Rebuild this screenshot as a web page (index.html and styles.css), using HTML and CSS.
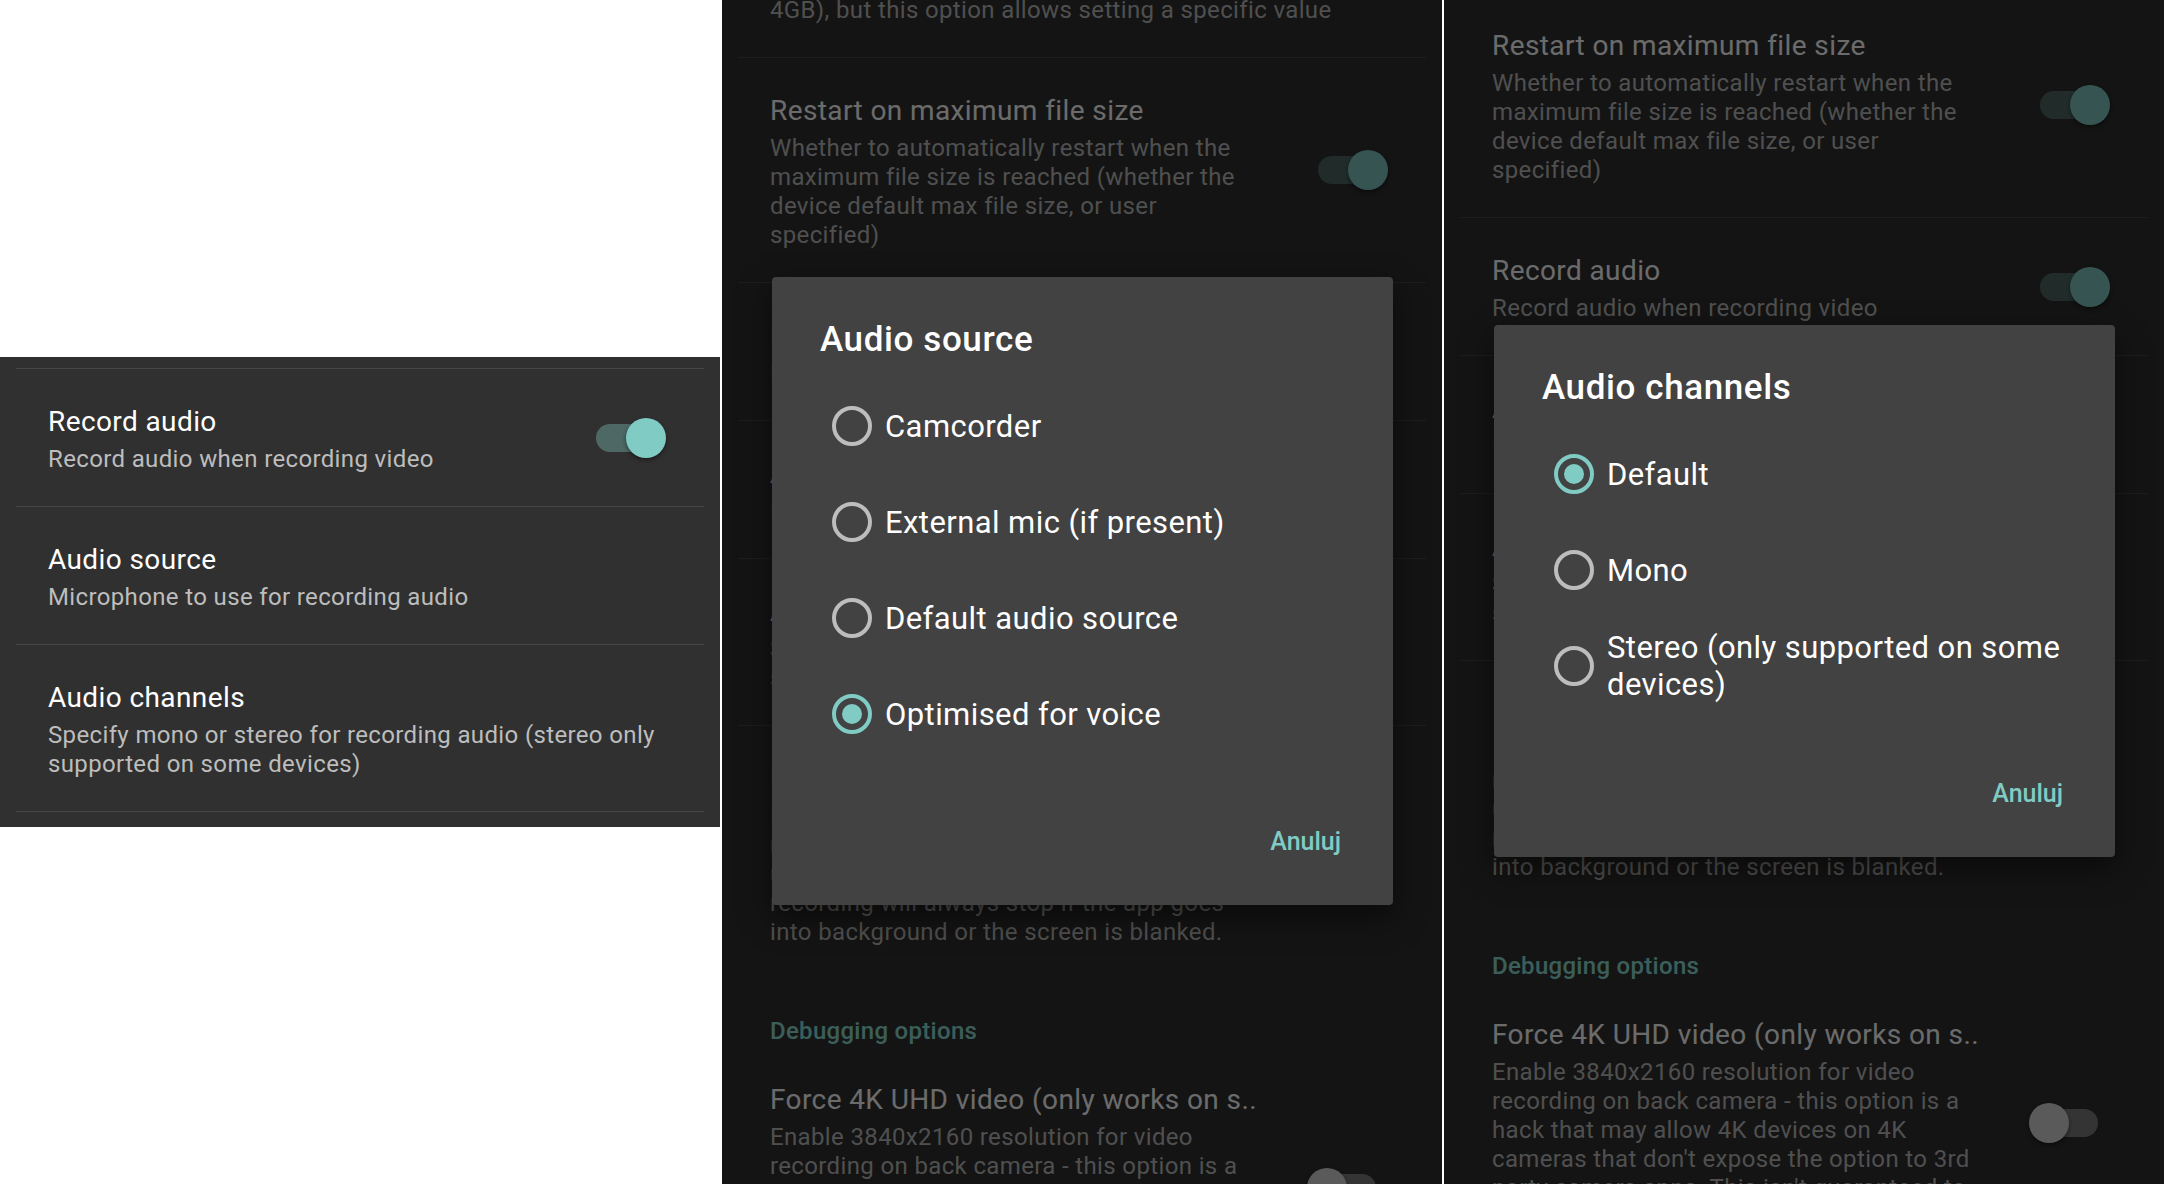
FILE: index.html
```html
<!DOCTYPE html>
<html lang="en">
<head>
<meta charset="utf-8">
<title>Audio settings</title>
<link rel="stylesheet" href="styles.css">
</head>
<body>
<div class="shots">

  <!-- Panel 1 -->
  <section class="panel panel-light">
    <div class="card">
      <div class="row row-switch">
        <div class="text">
          <div class="title">Record audio</div>
          <div class="summary">Record audio when recording video</div>
        </div>
        <div class="switch on"><span class="track"></span><span class="thumb"></span></div>
      </div>
      <div class="row">
        <div class="text">
          <div class="title">Audio source</div>
          <div class="summary">Microphone to use for recording audio</div>
        </div>
      </div>
      <div class="row row-last">
        <div class="text">
          <div class="title">Audio channels</div>
          <div class="summary">Specify mono or stereo for recording audio (stereo only supported on some devices)</div>
        </div>
      </div>
    </div>
  </section>

  <!-- Panel 2 -->
  <section class="panel panel-dark">
    <div class="list list-a">
      <div class="row">
        <div class="text">
          <div class="title">Maximum file size of videos</div>
          <div class="summary">Note that most Android devices have their own maximum file size for videos (typically around<br>4GB), but this option allows setting a specific value</div>
        </div>
      </div>
      <div class="row row-switch">
        <div class="text">
          <div class="title">Restart on maximum file size</div>
          <div class="summary">Whether to automatically restart when the maximum file size is reached (whether the device default max file size, or user specified)</div>
        </div>
        <div class="switch on"><span class="track"></span><span class="thumb"></span></div>
      </div>
      <div class="row row-switch">
        <div class="text">
          <div class="title">Record audio</div>
          <div class="summary">Record audio when recording video</div>
        </div>
        <div class="switch on"><span class="track"></span><span class="thumb"></span></div>
      </div>
      <div class="row">
        <div class="text">
          <div class="title">Audio source</div>
          <div class="summary">Microphone to use for recording audio</div>
        </div>
      </div>
      <div class="row">
        <div class="text">
          <div class="title">Audio channels</div>
          <div class="summary">Specify mono or stereo for recording audio (stereo only supported on some devices)</div>
        </div>
      </div>
      <div class="row row-switch">
        <div class="text">
          <div class="title">Lock screen when recording</div>
          <div class="summary">If enabled, the GUI will be locked when<br>recording video (swipe the screen to<br>unlock). Note that even when disabled,<br>recording will always stop if the app goes<br>into background or the screen is blanked.</div>
        </div>
        <div class="switch"><span class="track"></span><span class="thumb"></span></div>
      </div>
      <div class="category">Debugging options</div>
      <div class="row row-switch row-first">
        <div class="text">
          <div class="title nowrap">Force 4K UHD video (only works on s..</div>
          <div class="summary">Enable 3840x2160 resolution for video recording on back camera - this option is a hack that may allow 4K devices on 4K cameras that don't expose the option to 3rd party camera apps. This isn't guaranteed to work!</div>
        </div>
        <div class="switch"><span class="track"></span><span class="thumb"></span></div>
      </div>
    </div>
    <div class="scrim"></div>
    <div class="dialog dialog-a">
      <div class="dialog-title">Audio source</div>
      <div class="options">
        <div class="option"><span class="radio"></span><span class="option-label">Camcorder</span></div>
        <div class="option"><span class="radio"></span><span class="option-label">External mic (if present)</span></div>
        <div class="option"><span class="radio"></span><span class="option-label">Default audio source</span></div>
        <div class="option"><span class="radio checked"></span><span class="option-label">Optimised for voice</span></div>
      </div>
      <div class="buttons"><span class="button">Anuluj</span></div>
    </div>
  </section>

  <!-- Panel 3 -->
  <section class="panel panel-dark">
    <div class="list list-b">
      <div class="row">
        <div class="text">
          <div class="title">Maximum file size of videos</div>
          <div class="summary">Note that most Android devices have their own maximum file size for videos (typically around<br>4GB), but this option allows setting a specific value</div>
        </div>
      </div>
      <div class="row row-switch">
        <div class="text">
          <div class="title">Restart on maximum file size</div>
          <div class="summary">Whether to automatically restart when the maximum file size is reached (whether the device default max file size, or user specified)</div>
        </div>
        <div class="switch on"><span class="track"></span><span class="thumb"></span></div>
      </div>
      <div class="row row-switch">
        <div class="text">
          <div class="title">Record audio</div>
          <div class="summary">Record audio when recording video</div>
        </div>
        <div class="switch on"><span class="track"></span><span class="thumb"></span></div>
      </div>
      <div class="row">
        <div class="text">
          <div class="title">Audio source</div>
          <div class="summary">Microphone to use for recording audio</div>
        </div>
      </div>
      <div class="row">
        <div class="text">
          <div class="title">Audio channels</div>
          <div class="summary">Specify mono or stereo for recording audio (stereo only supported on some devices)</div>
        </div>
      </div>
      <div class="row row-switch">
        <div class="text">
          <div class="title">Lock screen when recording</div>
          <div class="summary">If enabled, the GUI will be locked when<br>recording video (swipe the screen to<br>unlock). Note that even when disabled,<br>recording will always stop if the app goes<br>into background or the screen is blanked.</div>
        </div>
        <div class="switch"><span class="track"></span><span class="thumb"></span></div>
      </div>
      <div class="category">Debugging options</div>
      <div class="row row-switch row-first">
        <div class="text">
          <div class="title nowrap">Force 4K UHD video (only works on s..</div>
          <div class="summary">Enable 3840x2160 resolution for video recording on back camera - this option is a hack that may allow 4K devices on 4K cameras that don't expose the option to 3rd party camera apps. This isn't guaranteed to work!</div>
        </div>
        <div class="switch"><span class="track"></span><span class="thumb"></span></div>
      </div>
    </div>
    <div class="scrim"></div>
    <div class="dialog dialog-b">
      <div class="dialog-title">Audio channels</div>
      <div class="options">
        <div class="option"><span class="radio checked"></span><span class="option-label">Default</span></div>
        <div class="option"><span class="radio"></span><span class="option-label">Mono</span></div>
        <div class="option"><span class="radio"></span><span class="option-label">Stereo (only supported on some devices)</span></div>
      </div>
      <div class="buttons"><span class="button">Anuluj</span></div>
    </div>
  </section>

</div>
</body>
</html>
```
FILE: styles.css
```css
* { box-sizing: border-box; }

html, body {
  margin: 0;
  padding: 0;
  background: #ffffff;
}

body {
  width: 2164px;
  height: 1184px;
  overflow: hidden;
  font-family: "Roboto", "Noto Sans", sans-serif;
  color: #ffffff;
}

.shots {
  display: flex;
  gap: 2px;
  height: 1184px;
}

.panel {
  flex: 0 0 720px;
  height: 1184px;
  position: relative;
  overflow: hidden;
}

.panel-light {
  background: #ffffff;
  padding-top: 357px;
}

.panel-dark {
  background: #303030;
}

/* Preference list */
.card {
  background: #303030;
  padding: 11px 0 15px;
}

.row {
  display: flex;
  align-items: center;
  margin: 0 16px;
  border-top: 1px solid #464646;
  padding: 35px 24px 32px 32px;
}

.row-last {
  border-bottom: 1px solid #464646;
}

.row-first {
  border-top-color: transparent;
}

.row .text {
  flex: 1 1 auto;
  min-width: 0;
}

.row-switch {
  padding-right: 38px;
}

.row-switch .text {
  flex: 0 0 490px;
}

.row-switch .switch {
  margin-left: auto;
  margin-top: -3px;
}

.title {
  font-size: 28px;
  line-height: 36px;
  letter-spacing: 0.4px;
  color: #ffffff;
}

.nowrap {
  white-space: nowrap;
}

.summary {
  margin-top: 5px;
  font-size: 24px;
  line-height: 29px;
  letter-spacing: 0.36px;
  color: #bdbdbd;
}

.category {
  padding: 38px 0 0 48px;
  font-size: 24px;
  line-height: 29px;
  font-weight: 500;
  letter-spacing: 0.3px;
  color: #8fe0d8;
}

.list-a { margin-top: -139px; }
.list-b { margin-top: -204px; }

/* Switch */
.switch {
  position: relative;
  flex: 0 0 81px;
  width: 81px;
  height: 40px;
}

.switch .track {
  position: absolute;
  left: 11px;
  top: 6px;
  width: 58px;
  height: 28px;
  border-radius: 14px;
  background: #7d7d7d;
}

.switch .thumb {
  position: absolute;
  left: 0;
  top: 0;
  width: 40px;
  height: 40px;
  border-radius: 50%;
  background: #d6d6d6;
  box-shadow: 0 2px 4px rgba(0, 0, 0, 0.45);
}

.switch.on .track {
  background: #4d6865;
}

.switch.on .thumb {
  left: auto;
  right: 0;
  background: #80cbc4;
}

/* Dim scrim over the list */
.scrim {
  position: absolute;
  inset: 0;
  background: rgba(0, 0, 0, 0.58);
}

/* Dialog */
.dialog {
  position: absolute;
  left: 50px;
  width: 621px;
  background: #424242;
  border-radius: 4px;
  box-shadow: 0 12px 32px rgba(0, 0, 0, 0.5);
  padding: 42px 0 45px;
}

.dialog-a { top: 277px; }
.dialog-b { top: 325px; }

.dialog-title {
  padding-left: 48px;
  font-size: 35px;
  line-height: 41px;
  font-weight: 500;
  letter-spacing: 0.6px;
  color: #ffffff;
}

.options {
  margin-top: 18px;
}

.option {
  display: flex;
  align-items: center;
  gap: 13px;
  height: 96px;
  padding: 0 36px 0 60px;
}

.option-label {
  font-size: 31px;
  line-height: 37px;
  letter-spacing: 0.42px;
  color: #ffffff;
}

.radio {
  flex: 0 0 40px;
  width: 40px;
  height: 40px;
  border: 4px solid #bdbdbd;
  border-radius: 50%;
  display: flex;
  align-items: center;
  justify-content: center;
}

.radio.checked {
  border-color: #80cbc4;
}

.radio.checked::after {
  content: "";
  width: 20px;
  height: 20px;
  border-radius: 50%;
  background: #80cbc4;
}

.buttons {
  display: flex;
  justify-content: flex-end;
  margin-top: 62px;
  padding-right: 52px;
  height: 36px;
}

.button {
  font-size: 25px;
  line-height: 36px;
  font-weight: 500;
  color: #80cbc4;
}
```
